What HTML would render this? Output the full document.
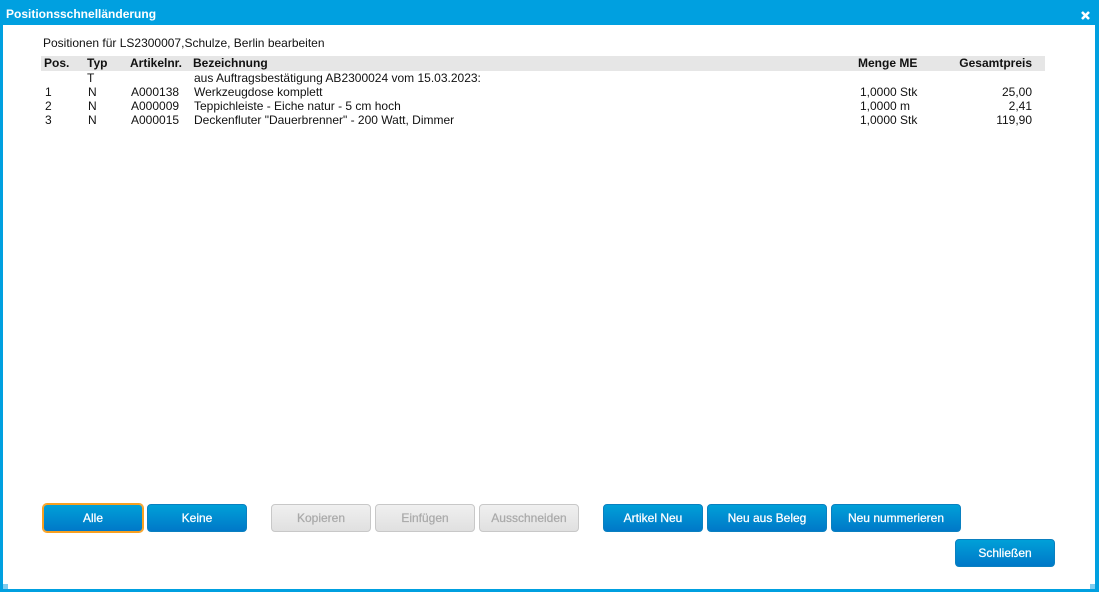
<!DOCTYPE html>
<html><head><meta charset="utf-8"><style>
html,body{margin:0;padding:0;width:1099px;height:592px;overflow:hidden;background:#fff}
body{position:relative;font-family:"Liberation Sans",Arial,sans-serif;font-size:12px;color:#111}
.b{position:absolute;background:#00a0e0}
.t{position:absolute;white-space:nowrap;line-height:14px;height:14px}
.h{font-weight:bold}
.r{text-align:right}
.btn{position:absolute;top:504px;height:28px;box-sizing:border-box;border-radius:4px;text-align:center;line-height:27px;font-size:12px;font-weight:normal;-webkit-text-stroke:0.25px currentColor;color:#fff;background:linear-gradient(#00a0d8,#0078c8);border:1px solid #0a80c0}
.dis{color:#aaa;background:linear-gradient(#f0f0f0,#e0e0e0);border:1px solid #c8c8c8}
</style></head><body>
<div class="b" style="left:0;top:0;width:1099px;height:25px"></div>
<div class="b" style="left:0;top:0;width:3px;height:592px"></div>
<div class="b" style="left:1095px;top:0;width:4px;height:592px"></div>
<div class="b" style="left:0;top:589px;width:1099px;height:3px"></div>
<div class="b" style="left:3px;top:584px;width:5px;height:5px;background:#80cdf0"></div>
<div class="b" style="left:1090px;top:584px;width:5px;height:5px;background:#80cdf0"></div>
<div class="t h" style="left:6px;top:7px;color:#fff">Positionsschnelländerung</div>
<svg style="position:absolute;left:1081px;top:11px" width="9" height="9" viewBox="0 0 9 9"><path d="M1 1L8 8M8 1L1 8" stroke="#fff" stroke-width="2.6"/></svg>
<div class="t" style="left:43px;top:36px">Positionen für LS2300007,Schulze, Berlin bearbeiten</div>
<div style="position:absolute;left:41px;top:56px;width:1004px;height:15px;background:#e6e6e6"></div>
<div class="t h" style="left:44px;top:56px">Pos.</div>
<div class="t h" style="left:87px;top:56px">Typ</div>
<div class="t h" style="left:130px;top:56px">Artikelnr.</div>
<div class="t h" style="left:193px;top:56px">Bezeichnung</div>
<div class="t h" style="left:858px;top:56px">Menge ME</div>
<div class="t h r" style="left:932px;width:100px;top:56px">Gesamtpreis</div>
<div class="t" style="left:87px;top:71px">T</div>
<div class="t" style="left:194px;top:71px">aus Auftragsbestätigung AB2300024 vom 15.03.2023:</div>
<div class="t" style="left:45px;top:85px">1</div><div class="t" style="left:88px;top:85px">N</div><div class="t" style="left:131px;top:85px">A000138</div><div class="t" style="left:194px;top:85px">Werkzeugdose komplett</div><div class="t" style="left:860px;top:85px">1,0000 Stk</div><div class="t r" style="left:932px;width:100px;top:85px">25,00</div>
<div class="t" style="left:45px;top:99px">2</div><div class="t" style="left:88px;top:99px">N</div><div class="t" style="left:131px;top:99px">A000009</div><div class="t" style="left:194px;top:99px">Teppichleiste - Eiche natur - 5 cm hoch</div><div class="t" style="left:860px;top:99px">1,0000 m</div><div class="t r" style="left:932px;width:100px;top:99px">2,41</div>
<div class="t" style="left:45px;top:113px">3</div><div class="t" style="left:88px;top:113px">N</div><div class="t" style="left:131px;top:113px">A000015</div><div class="t" style="left:194px;top:113px">Deckenfluter "Dauerbrenner" - 200 Watt, Dimmer</div><div class="t" style="left:860px;top:113px">1,0000 Stk</div><div class="t r" style="left:932px;width:100px;top:113px">119,90</div>
<div class="btn" style="left:43px;width:100px;box-shadow:0 0 0 1px #f8a020;border-color:#f8a020">Alle</div>
<div class="btn" style="left:147px;width:100px">Keine</div>
<div class="btn dis" style="left:271px;width:100px">Kopieren</div>
<div class="btn dis" style="left:375px;width:100px">Einfügen</div>
<div class="btn dis" style="left:479px;width:100px">Ausschneiden</div>
<div class="btn" style="left:603px;width:100px">Artikel Neu</div>
<div class="btn" style="left:707px;width:120px">Neu aus Beleg</div>
<div class="btn" style="left:831px;width:130px">Neu nummerieren</div>
<div class="btn" style="left:955px;top:539px;width:100px">Schließen</div>
</body></html>
